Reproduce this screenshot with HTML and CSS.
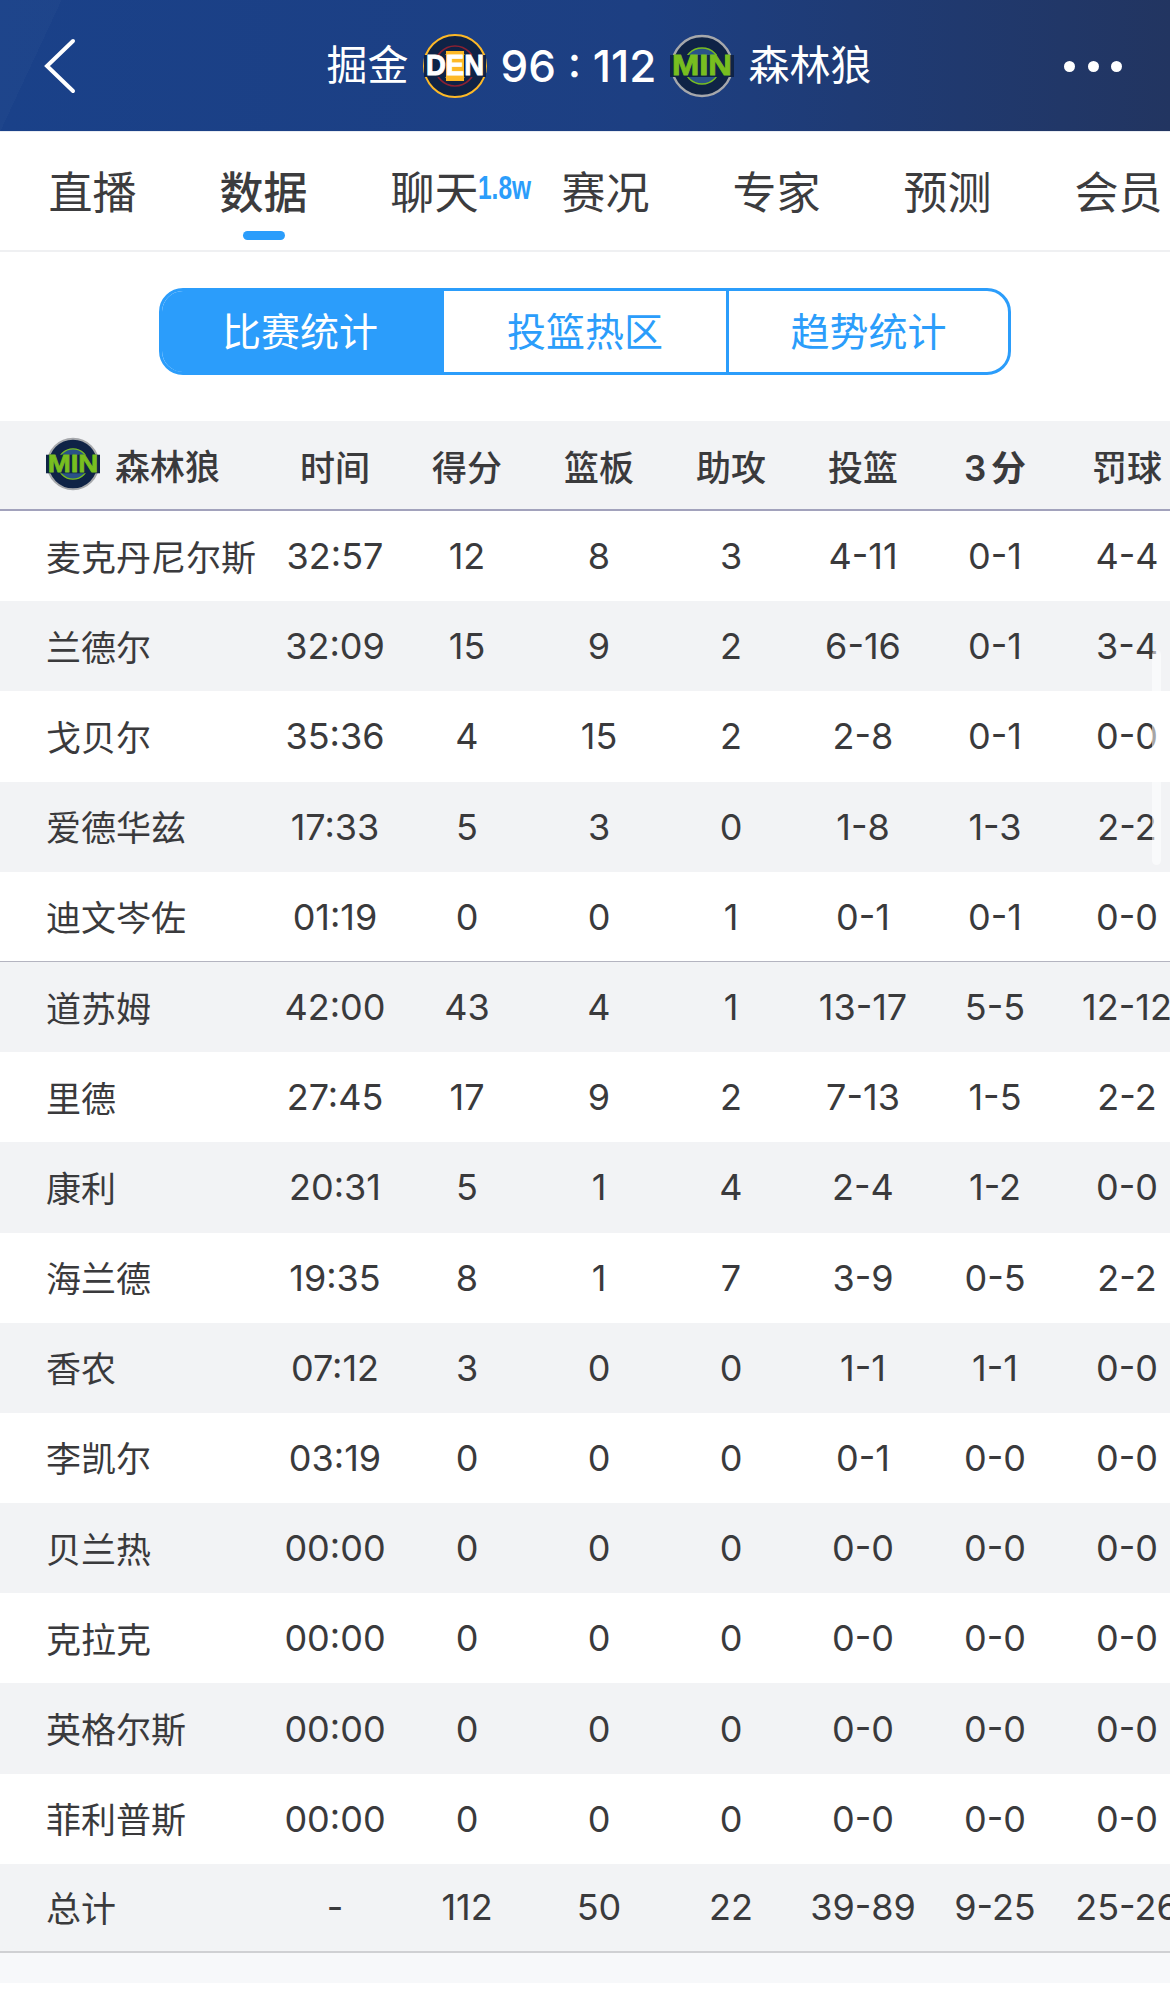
FILE: index.html
```html
<!DOCTYPE html>
<html lang="zh-CN">
<head>
<meta charset="utf-8">
<title>数据</title>
<link rel="stylesheet" href="styles.css">
</head>
<body>
<header class="topbar">
  <svg class="back" width="32" height="56" viewBox="0 0 32 56"><path d="M29 3 3 28l26 25" fill="none" stroke="#fff" stroke-width="4" stroke-linecap="round"/></svg>
  <div class="match">
    <span class="team">掘金</span>
    <svg class="logo-lg" viewBox="0 0 64 64">
      <circle cx="32" cy="32" r="31" fill="#0f2346" stroke="#fdb927" stroke-width="2"/>
      <circle cx="32" cy="32" r="20" fill="none" stroke="#8b2131" stroke-width="1.6"/>
      <circle cx="32" cy="32" r="15" fill="#fdb927"/>
      <rect x="1" y="21" width="62" height="22" fill="#0f2346"/>
      <rect x="23" y="17" width="18" height="30" fill="#fdb927"/>
      <text x="32" y="41" class="logo-text logo-den" textLength="58" lengthAdjust="spacingAndGlyphs">DEN</text>
    </svg>
    <span class="score">96 : 112</span>
    <svg class="logo-lg" viewBox="0 0 64 64">
      <circle cx="32" cy="32" r="30" fill="#0f2346" stroke="#a6a8ac" stroke-width="2.4"/>
      <circle cx="32" cy="32" r="18" fill="#2a5288" stroke="#78be20" stroke-width="1.4"/>
      <rect x="0" y="21" width="64" height="22" fill="#0f2346"/>
      <text x="32" y="41" class="logo-text logo-min" textLength="60" lengthAdjust="spacingAndGlyphs">MIN</text>
    </svg>
    <span class="team">森林狼</span>
  </div>
  <div class="dots"><i></i><i></i><i></i></div>
</header>

<nav class="tabs">
  <a class="tab">直播</a>
  <a class="tab active">数据</a>
  <a class="tab">聊天<sup class="badge">1.8w</sup></a>
  <a class="tab">赛况</a>
  <a class="tab">专家</a>
  <a class="tab">预测</a>
  <a class="tab">会员</a>
</nav>

<div class="segment-wrap">
  <div class="segment">
    <span class="seg on">比赛统计</span>
    <span class="seg mid">投篮热区</span>
    <span class="seg">趋势统计</span>
  </div>
</div>

<section class="stats">
  <div class="row head">
    <span class="name">
      <svg class="logo-sm" viewBox="0 0 64 64">
        <circle cx="32" cy="32" r="30" fill="#0f2346" stroke="#a6a8ac" stroke-width="2.4"/>
        <circle cx="32" cy="32" r="18" fill="#2a5288" stroke="#78be20" stroke-width="1.4"/>
        <rect x="0" y="21" width="64" height="22" fill="#0f2346"/>
        <text x="32" y="41" class="logo-text logo-min" textLength="60" lengthAdjust="spacingAndGlyphs">MIN</text>
      </svg>森林狼</span>
    <span>时间</span><span>得分</span><span>篮板</span><span>助攻</span><span>投篮</span><span class="three">3 分</span><span>罚球</span>
  </div>
  <div class="row"><span class="name">麦克丹尼尔斯</span><span>32:57</span><span>12</span><span>8</span><span>3</span><span>4-11</span><span>0-1</span><span>4-4</span></div>
  <div class="row"><span class="name">兰德尔</span><span>32:09</span><span>15</span><span>9</span><span>2</span><span>6-16</span><span>0-1</span><span>3-4</span></div>
  <div class="row"><span class="name">戈贝尔</span><span>35:36</span><span>4</span><span>15</span><span>2</span><span>2-8</span><span>0-1</span><span>0-0</span></div>
  <div class="row"><span class="name">爱德华兹</span><span>17:33</span><span>5</span><span>3</span><span>0</span><span>1-8</span><span>1-3</span><span>2-2</span></div>
  <div class="row starters-end"><span class="name">迪文岑佐</span><span>01:19</span><span>0</span><span>0</span><span>1</span><span>0-1</span><span>0-1</span><span>0-0</span></div>
  <div class="row"><span class="name">道苏姆</span><span>42:00</span><span>43</span><span>4</span><span>1</span><span>13-17</span><span>5-5</span><span>12-12</span></div>
  <div class="row"><span class="name">里德</span><span>27:45</span><span>17</span><span>9</span><span>2</span><span>7-13</span><span>1-5</span><span>2-2</span></div>
  <div class="row"><span class="name">康利</span><span>20:31</span><span>5</span><span>1</span><span>4</span><span>2-4</span><span>1-2</span><span>0-0</span></div>
  <div class="row"><span class="name">海兰德</span><span>19:35</span><span>8</span><span>1</span><span>7</span><span>3-9</span><span>0-5</span><span>2-2</span></div>
  <div class="row"><span class="name">香农</span><span>07:12</span><span>3</span><span>0</span><span>0</span><span>1-1</span><span>1-1</span><span>0-0</span></div>
  <div class="row"><span class="name">李凯尔</span><span>03:19</span><span>0</span><span>0</span><span>0</span><span>0-1</span><span>0-0</span><span>0-0</span></div>
  <div class="row"><span class="name">贝兰热</span><span>00:00</span><span>0</span><span>0</span><span>0</span><span>0-0</span><span>0-0</span><span>0-0</span></div>
  <div class="row"><span class="name">克拉克</span><span>00:00</span><span>0</span><span>0</span><span>0</span><span>0-0</span><span>0-0</span><span>0-0</span></div>
  <div class="row"><span class="name">英格尔斯</span><span>00:00</span><span>0</span><span>0</span><span>0</span><span>0-0</span><span>0-0</span><span>0-0</span></div>
  <div class="row"><span class="name">菲利普斯</span><span>00:00</span><span>0</span><span>0</span><span>0</span><span>0-0</span><span>0-0</span><span>0-0</span></div>
  <div class="row total"><span class="name">总计</span><span>-</span><span>112</span><span>50</span><span>22</span><span>39-89</span><span>9-25</span><span>25-26</span></div>
  <div class="scrollthumb"></div>
</section>
<div class="footer-strip"></div>
</body>
</html>
```

FILE: styles.css
```css
* { box-sizing: border-box; }
html, body { margin: 0; padding: 0; background: #fff; }
body {
  width: 1170px;
  height: 2011px;
  overflow: hidden;
  font-family: Inter, "Noto Sans CJK SC", sans-serif;
  color: #3a3a3c;
}

.topbar {
  height: 131px;
  position: relative;
  display: flex;
  align-items: center;
  justify-content: center;
  background:
    linear-gradient(115deg, rgba(255,255,255,0.02) 0 5%, transparent 5%),
    linear-gradient(90deg, #1a4189 0%, #1d3f82 55%, #223561 100%);
  color: #fff;
}
.back { position: absolute; left: 44px; top: 38px; }
.match { display: flex; align-items: center; gap: 14px; padding-left: 28px; }
.team { font-size: 41px; line-height: 1; }
.score { font-size: 44px; font-weight: 500; line-height: 1; }
.logo-lg { width: 64px; height: 64px; }
.logo-text {
  text-anchor: middle;
  font-family: "Liberation Sans", sans-serif;
  font-weight: 700;
  font-size: 29px;
  stroke-width: 0.9;
}
.logo-min { fill: #78be20; stroke: #78be20; }
.logo-den { fill: #fff; stroke: #fff; }
.dots { position: absolute; left: 1064px; top: 61px; width: 58px; display: flex; justify-content: space-between; }
.dots i { width: 11px; height: 11px; border-radius: 50%; background: #fff; display: block; }

.tabs {
  height: 121px;
  display: flex;
  padding-left: 7px;
  border-top: 1px solid #e9ecf2;
  border-bottom: 2px solid #eff0f2;
  overflow: hidden;
}
.tab {
  flex: 0 0 171px;
  position: relative;
  text-align: center;
  font-size: 44px;
  line-height: 1;
  padding-top: 39px;
  color: #3c3c3e;
}
.tab.active { font-weight: 500; }
.tab.active::after {
  content: "";
  position: absolute;
  left: 65px;
  top: 99px;
  width: 42px;
  height: 9px;
  border-radius: 5px;
  background: #2b9dfb;
}
.badge {
  position: absolute;
  left: 129px;
  top: 38px;
  font-family: "Liberation Sans", sans-serif;
  font-size: 34px;
  font-weight: 700;
  line-height: 1;
  color: #2b9dfb;
  transform: scaleX(0.72);
  transform-origin: left top;
}

.segment-wrap { padding: 36px 159px 0; height: 169px; }
.segment {
  height: 87px;
  display: grid;
  grid-template-columns: 282px 285px 279px;
  border: 3px solid #2b9dfb;
  border-radius: 24px;
  overflow: hidden;
}
.seg {
  display: flex;
  align-items: center;
  justify-content: center;
  padding-bottom: 5px;
  font-size: 39px;
  color: #2b9dfb;
}
.seg.on { background: #2b9dfb; color: #fff; padding-right: 6px; }
.seg.mid { border-right: 3px solid #2b9dfb; }

.stats { position: relative; overflow: hidden; }
.row {
  display: grid;
  grid-template-columns: 269px repeat(7, 132px);
  height: 90.2px;
  align-items: center;
  justify-items: center;
  font-size: 36px;
  white-space: nowrap;
}
.row:nth-child(even) { background: #fff; }
.row:nth-child(odd) { background: #f2f3f5; }
.row.head { height: 90px; background: #f2f3f5; border-bottom: 2px solid #a2a2bc; font-size: 35px; font-weight: 500; }
.three { font-weight: 600; word-spacing: -4px; }
.name {
  justify-self: start;
  padding-left: 46px;
  padding-bottom: 2px;
  display: flex;
  align-items: center;
  font-size: 35px;
  color: #3a3a3c;
}
.starters-end { box-shadow: inset 0 -1px 0 #b4b4c0; }
.logo-sm { width: 54px; height: 54px; margin-right: 15px; }
.row.total { border-bottom: 2px solid #cfd0d3; height: 89.2px; }
.scrollthumb {
  position: absolute;
  left: 1152px;
  top: 229px;
  width: 9px;
  height: 215px;
  border-radius: 5px;
  background: rgba(255,255,255,0.55);
}
.footer-strip { height: 30px; background: #f7f8fa; }
```
